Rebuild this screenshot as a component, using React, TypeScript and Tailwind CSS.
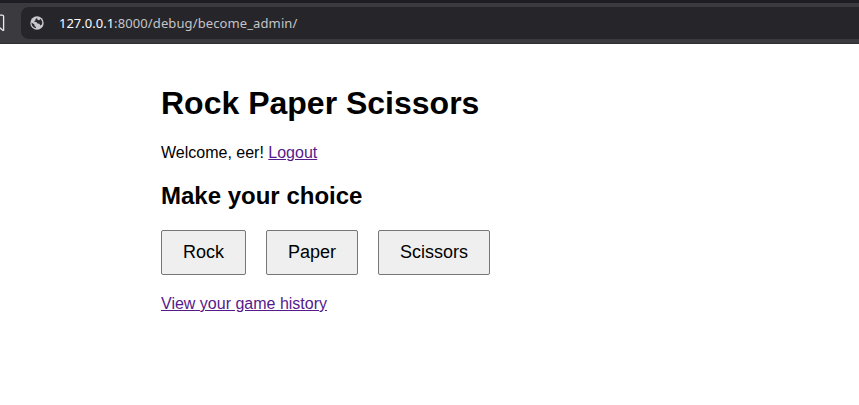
const choices = ["Rock", "Paper", "Scissors"];

function GlobeIcon() {
  return (
    <svg width="14" height="14" viewBox="0 0 14 14" className="shrink-0" aria-hidden="true">
      <circle cx="7" cy="7" r="6.7" fill="#c9c9cd" />
      <path
        d="M7 1.9 5.3 3.6 5.4 4.7 3.9 6 6.5 6.1 7.5 7.6 9.5 7.8 10.2 9.4 11.9 8.6 12.3 6.5 11.4 3.9 10.2 2.7 9.4 4.3 7.7 4.1Z M1.5 6.6 4.4 8.6 4.6 9.9 6 11 5.9 12.3 3.6 11.3 1.9 9.3Z"
        fill="#29282e"
      />
    </svg>
  );
}

function BrowserBar() {
  return (
    <header className="flex h-11 border-t-[3px] border-b border-t-[#1e1d23] border-b-[#302f34] bg-[#3b3a3f]">
      <div className="w-[21px] shrink-0 pt-[11px]">
        <svg width="6" height="18" viewBox="0 0 6 18" fill="none" aria-hidden="true">
          <path d="M0 1.2H2.2Q3.6 1.2 3.6 2.6V16.2L2.8 16.4L0 13.8" stroke="#ececf0" strokeWidth="1.3" />
        </svg>
      </div>
      <div className="mt-1 flex h-8 flex-1 items-center rounded-l-lg bg-[#26252a] pl-[9px]">
        <GlobeIcon />
        <span className="ml-[15px] font-['Noto_Sans',sans-serif] text-[13px] leading-5 text-[#c4c4c7]">
          <span className="text-[#fbfbfe]">127.0.0.1</span>
          <span className="tracking-[0.11px]">:8000/debug/become_admin/</span>
        </span>
      </div>
    </header>
  );
}

export default function App() {
  return (
    <div className="min-h-screen bg-white font-['Liberation_Sans',Arial,sans-serif] text-base text-black">
      <BrowserBar />
      <main className="pt-[41px] pl-[161px]">
        <h1 className="text-[32px] leading-9 font-bold">Rock Paper Scissors</h1>
        <p className="mt-[23px] leading-[18px]">
          Welcome, eer! <a href="#" className="text-[#551a8b] underline">Logout</a>
        </p>
        <h2 className="mt-5 text-2xl leading-7 font-bold">Make your choice</h2>
        <div className="mt-5 flex gap-5">
          {choices.map((choice) => (
            <button key={choice} className="h-[45px] rounded-[2px] border border-[#767676] bg-[#efefef] px-[21px] pb-0.5 text-lg leading-5">
              {choice}
            </button>
          ))}
        </div>
        <a href="#" className="mt-5 inline-block leading-[18px] text-[#551a8b] underline">
          View your game history
        </a>
      </main>
    </div>
  );
}
